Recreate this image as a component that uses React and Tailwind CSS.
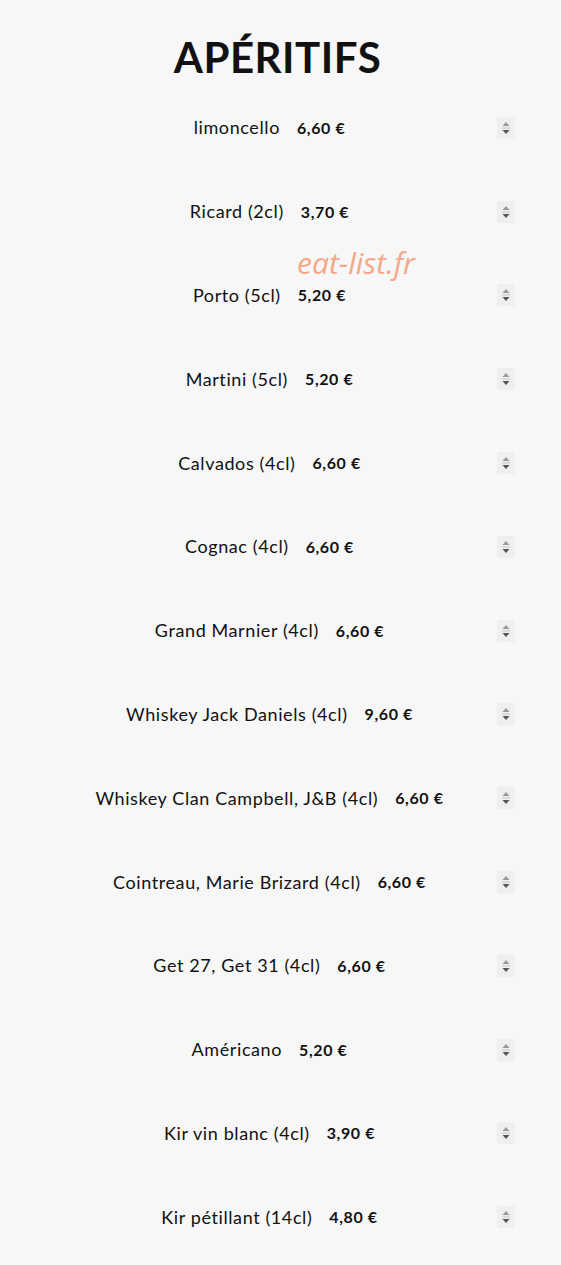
import React from 'react';

const items = [
  { name: 'limoncello', price: '6,60 €' },
  { name: 'Ricard (2cl)', price: '3,70 €' },
  { name: 'Porto (5cl)', price: '5,20 €' },
  { name: 'Martini (5cl)', price: '5,20 €' },
  { name: 'Calvados (4cl)', price: '6,60 €' },
  { name: 'Cognac (4cl)', price: '6,60 €' },
  { name: 'Grand Marnier (4cl)', price: '6,60 €' },
  { name: 'Whiskey Jack Daniels (4cl)', price: '9,60 €' },
  { name: 'Whiskey Clan Campbell, J&B (4cl)', price: '6,60 €' },
  { name: 'Cointreau, Marie Brizard (4cl)', price: '6,60 €' },
  { name: 'Get 27, Get 31 (4cl)', price: '6,60 €' },
  { name: 'Américano', price: '5,20 €' },
  { name: 'Kir vin blanc (4cl)', price: '3,90 €' },
  { name: 'Kir pétillant (14cl)', price: '4,80 €' },
];

const Spinner = () => (
  <div className="w-[18px] h-[22px] ml-[-42px] mr-[24px] shrink-0 bg-[#efefef] flex items-center justify-center">
    <svg width="10" height="16" viewBox="0 0 10 16">
      <path d="M5 2 L8.5 6 L1.5 6 Z" fill="#9a9a9a" />
      <line x1="1" y1="8" x2="9" y2="8" stroke="#c8c8c8" strokeWidth="1" />
      <path d="M1.5 10 L8.5 10 L5 14 Z" fill="#555" />
    </svg>
  </div>
);

const App = () => {
  return (
    <div className="relative min-h-[1265px] bg-[#f7f7f7] text-[#111] font-['Lato',sans-serif]">
      <h1 className="pt-[31px] h-[86px] pr-[6px] text-center text-[42px] leading-[52px] font-bold tracking-[0.5px] text-[#111]">
        APÉRITIFS
      </h1>
      <div className="flex flex-col">
        {items.map((it) => (
          <div key={it.name} className="flex items-center h-[83.8px] pr-[22px]">
            <div className="flex-1 flex items-center justify-center gap-[17px]">
              <span className="text-[18px] tracking-[0.6px]">{it.name}</span>
              <span className="text-[16px] font-bold tracking-[0.6px]">{it.price}</span>
            </div>
            <Spinner />
          </div>
        ))}
      </div>
      <div className="absolute left-[297px] top-[248px] text-[30px] italic text-[#f4a888] font-['Open_Sans',sans-serif] leading-none">
        eat-list.fr
      </div>
    </div>
  );
};

export default App;
